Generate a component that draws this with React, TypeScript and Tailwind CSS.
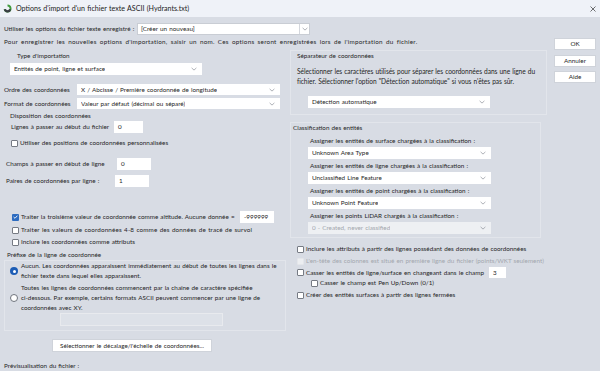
import React from "react";

const Chevron = () => (
  <svg width="6" height="4" viewBox="0 0 6 4" className="shrink-0">
    <path d="M0.6 0.9 L3 3.1 L5.4 0.9" fill="none" stroke="#8c9099" strokeWidth="0.7" />
  </svg>
);

function Select({ value, className = "", disabled = false }: { value: string; className?: string; disabled?: boolean }) {
  return (
    <div
      className={`flex shrink-0 items-center justify-between pl-[4px] pr-[5px] ${
        disabled ? "bg-[#eef0f3] text-[#a3a7ae]" : "bg-white text-[#1f1f1f]"
      } ${className}`}
    >
      <span className="truncate">{value}</span>
      <Chevron />
    </div>
  );
}

function Field({ value, className = "" }: { value: string; className?: string }) {
  return <div className={`flex shrink-0 items-center bg-white pl-[4px] text-[#1f1f1f] ${className}`}>{value}</div>;
}

function Box({ checked = false, disabled = false }: { checked?: boolean; disabled?: boolean }) {
  if (checked) {
    return (
      <span className="flex h-[7px] w-[7px] shrink-0 items-center justify-center rounded-[1px] bg-[#2d6cc0]">
        <svg width="5" height="4" viewBox="0 0 5 4">
          <path d="M0.6 2 L2 3.3 L4.4 0.7" fill="none" stroke="white" strokeWidth="0.9" />
        </svg>
      </span>
    );
  }
  return (
    <span
      className={`h-[7px] w-[7px] shrink-0 rounded-[1px] border ${
        disabled ? "border-[#e4e6ea] bg-[#eceef1]" : "border-[#767b84] bg-white"
      }`}
    />
  );
}

function Radio({ on = false }: { on?: boolean }) {
  if (on) {
    return (
      <span className="flex h-[8px] w-[8px] shrink-0 items-center justify-center rounded-full bg-[#1d5db5]">
        <span className="h-[3px] w-[3px] rounded-full bg-white" />
      </span>
    );
  }
  return <span className="h-[8px] w-[8px] shrink-0 rounded-full border border-[#6f747d] bg-white" />;
}

function Check({ label, checked = false, disabled = false, className = "" }: { label: string; checked?: boolean; disabled?: boolean; className?: string }) {
  return (
    <div className={`flex h-[10px] items-center gap-[2px] whitespace-nowrap ${disabled ? "text-[#a3a7ae]" : ""} ${className}`}>
      <Box checked={checked} disabled={disabled} />
      <span>{label}</span>
    </div>
  );
}

function Button({ label, className = "" }: { label: string; className?: string }) {
  return (
    <div className={`flex h-[12px] items-center justify-center border border-[#cfd3da] bg-white text-[#1f1f1f] ${className}`}>
      {label}
    </div>
  );
}

export default function App() {
  return (
    <div
      className="h-[371px] w-[600px] overflow-hidden bg-[#d8dce4] text-[6.3px] leading-[10px] text-[#262626] [word-spacing:0.5px]"
      style={{ fontFamily: 'Lato, "Open Sans", sans-serif' }}
    >
      {/* title bar */}
      <div className="flex h-[17px] items-center bg-[#eff2f8] pl-[3px] pr-[4px]">
        <svg width="9" height="9" viewBox="0 0 10 10" className="shrink-0">
          <path d="M5 0.6 A4.4 4.4 0 1 1 0.8 6.2 L3 5.6 A2.2 2.2 0 1 0 5 2.8 Z" fill="#3f9a3c" />
          <path d="M0.8 6.2 A4.4 4.4 0 0 0 9.2 6.4 L7 5.6 A2.2 2.2 0 0 1 3 5.6 Z" fill="#3a3e44" />
        </svg>
        <span className="ml-[4px] text-[7.1px] text-[#1b1b1b]">Options d'import d'un fichier texte ASCII (Hydrants.txt)</span>
        <svg width="6" height="6" viewBox="0 0 6 6" className="ml-auto">
          <path d="M0.5 0.5 L5.5 5.5 M5.5 0.5 L0.5 5.5" stroke="#333" strokeWidth="0.7" />
        </svg>
      </div>

      <div className="flex pl-[4px]">
        <div className="w-[546px]">
          {/* row 1 */}
          <div className="mt-[6px] flex h-[12px] items-center">
            <span className="w-[133px] whitespace-nowrap">Utiliser les options du fichier texte enregistré :</span>
            <div className="flex h-[12px] w-[173px] items-center border border-[#c9cdd4] bg-white">
              <span className="flex-1 pl-[3px] text-[#1f1f1f]">[Créer un nouveau]</span>
              <span className="flex h-full w-[10px] items-center justify-center border-l border-[#d4d7dd]">
                <Chevron />
              </span>
            </div>
          </div>
          <div className="mt-[2px] h-[10px] whitespace-nowrap tracking-[0.25px] [word-spacing:1.35px]">
            Pour enregistrer les nouvelles options d'importation, saisir un nom. Ces options seront enregistrées lors de l'importation du fichier.
          </div>

          <div className="mt-[3px] flex">
            {/* left column */}
            <div className="flex w-[282px] flex-col">
              <div className="mt-[1px] h-[10px] pl-[13px]">Type d'importation</div>
              <Select value="Entités de point, ligne et surface" className="ml-[6px] mt-[2px] h-[12px] w-[192px]" />
              <div className="mt-[9px] flex h-[11px] items-center">
                <span className="w-[73px] whitespace-nowrap">Ordre des coordonnées</span>
                <Select value="X / Abcisse / Première coordonnée de longitude" className="h-[11px] w-[203px]" />
              </div>
              <div className="mt-[3px] flex h-[11px] items-center">
                <span className="w-[73px] whitespace-nowrap">Format de coordonnées</span>
                <Select value="Valeur par défaut (décimal ou séparé)" className="h-[11px] w-[203px]" />
              </div>
              <div className="mt-[2px] h-[10px] pl-[6px]">Disposition des coordonnées</div>
              <div className="flex h-[12px] items-center">
                <span className="w-[110px] whitespace-nowrap pl-[7px]">Lignes à passer au début du fichier</span>
                <Field value="0" className="h-[12px] w-[29px]" />
              </div>
              <Check label="Utiliser des positions de coordonnées personnalisées" className="mt-[5px] pl-[7px]" />
              <div className="mt-[10px] flex h-[12px] items-center">
                <span className="w-[113px] whitespace-nowrap pl-[2px]">Champs à passer en début de ligne</span>
                <Field value="0" className="h-[12px] w-[34px]" />
              </div>
              <div className="mt-[5px] flex h-[12px] items-center">
                <span className="w-[111px] whitespace-nowrap pl-[2px]">Paires de coordonnées par ligne :</span>
                <Field value="1" className="h-[12px] w-[34px]" />
              </div>
              <div className="mt-[24px] flex h-[12px] items-center">
                <div className="w-[236px] pl-[8px]">
                  <Check checked label="Traiter la troisième valeur de coordonnée comme altitude. Aucune donnée =" />
                </div>
                <Field value="-999999" className="h-[12px] w-[34px]" />
              </div>
              <Check label="Traiter les valeurs de coordonnées 4-8 comme des données de tracé de survol" className="mt-[2px] pl-[8px] tracking-[0.15px]" />
              <Check label="Inclure les coordonnées comme attributs" className="mt-[2px] pl-[8px]" />
              <div className="mt-[3px] h-[10px] pl-[3px]">Préfixe de la ligne de coordonnée</div>
              <div className="flex flex-col border border-[#e2e5eb] pb-[4px]">
                <div className="flex items-center gap-[3px] pl-[5px]">
                  <Radio on />
                  <span className="whitespace-nowrap">
                    Aucun. Les coordonnées apparaissent immédiatement au début de toutes les lignes dans le
                    <br />
                    fichier texte dans lequel elles apparaissent.
                  </span>
                </div>
                <div className="mt-[2px] flex items-center gap-[3px] pl-[5px]">
                  <Radio />
                  <span className="whitespace-nowrap">
                    Toutes les lignes de coordonnées commencent par la chaîne de caractère spécifiée
                    <br />
                    ci-dessous. Par exemple, certains formats ASCII peuvent commencer par une ligne de
                    <br />
                    coordonnées avec XY.
                  </span>
                </div>
                <div className="ml-[55px] h-[13px] w-[163px] border border-[#e8eaee] bg-[#dde1e8]" />
              </div>
              <Button label="Sélectionner le décalage/l'échelle de coordonnées..." className="ml-[48px] mt-[8px] h-[13px] w-[160px]" />
              <div className="mt-[9px] h-[10px]">Prévisualisation du fichier :</div>
            </div>

            {/* right column */}
            <div className="ml-[4px] flex w-[257px] flex-col">
              <div className="flex flex-col border border-[#e2e5eb] pb-[6px]">
                <div className="h-[10px] pl-[6px]">Séparateur de coordonnées</div>
                <div className="mt-[5px] whitespace-nowrap pl-[6px] text-[6.6px] tracking-[-0.06px]">
                  Sélectionner les caractères utilisés pour séparer les coordonnées dans une ligne du
                  <br />
                  fichier. Sélectionner l'option "Détection automatique" si vous n'êtes pas sûr.
                </div>
                <Select value="Détection automatique" className="ml-[17px] mt-[10px] h-[12px] w-[182px]" />
              </div>
              <div className="mt-[7px] flex w-[251px] flex-col border border-[#e2e5eb] pb-[3px]">
                <div className="h-[10px] pl-[2px]">Classification des entités</div>
                <div className="mt-[3px] h-[10px] pl-[19px]">Assigner les entités de surface chargées à la classification :</div>
                <Select value="Unknown Area Type" className="ml-[17px] mt-[1px] h-[12px] w-[183px]" />
                <div className="mt-[2px] h-[10px] pl-[19px]">Assigner les entités de ligne chargées à la classification :</div>
                <Select value="Unclassified Line Feature" className="ml-[17px] mt-[1px] h-[12px] w-[183px]" />
                <div className="mt-[2px] h-[10px] pl-[19px]">Assigner les entités de point chargées à la classification :</div>
                <Select value="Unknown Point Feature" className="ml-[17px] mt-[1px] h-[12px] w-[183px]" />
                <div className="mt-[2px] h-[10px] pl-[19px]">Assigner les points LiDAR chargés à la classification :</div>
                <Select disabled value="0 - Created, never classified" className="ml-[17px] mt-[1px] h-[12px] w-[183px]" />
              </div>
              <Check label="Inclure les attributs à partir des lignes possédant des données de coordonnées" className="mt-[6px] pl-[7px]" />
              <Check disabled label="L'en-tête des colonnes est situé en première ligne du fichier (points/WKT seulement)" className="mt-[2px] pl-[7px]" />
              <div className="mt-[1px] flex h-[11px] items-center">
                <div className="w-[199px] pl-[7px]">
                  <Check label="Casser les entités de ligne/surface en changeant dans le champ" />
                </div>
                <Field value="3" className="h-[11px] w-[17px]" />
              </div>
              <Check label="Casser le champ est Pen Up/Down (0/1)" className="pl-[21px]" />
              <Check label="Créer des entités surfaces à partir des lignes fermées" className="mt-[2px] pl-[7px]" />
            </div>
          </div>
        </div>

        {/* buttons */}
        <div className="ml-[4px] flex w-[42px] flex-col pt-[21px]">
          <Button label="OK" />
          <Button label="Annuler" className="mt-[5px]" />
          <Button label="Aide" className="mt-[4px]" />
        </div>
      </div>
    </div>
  );
}
